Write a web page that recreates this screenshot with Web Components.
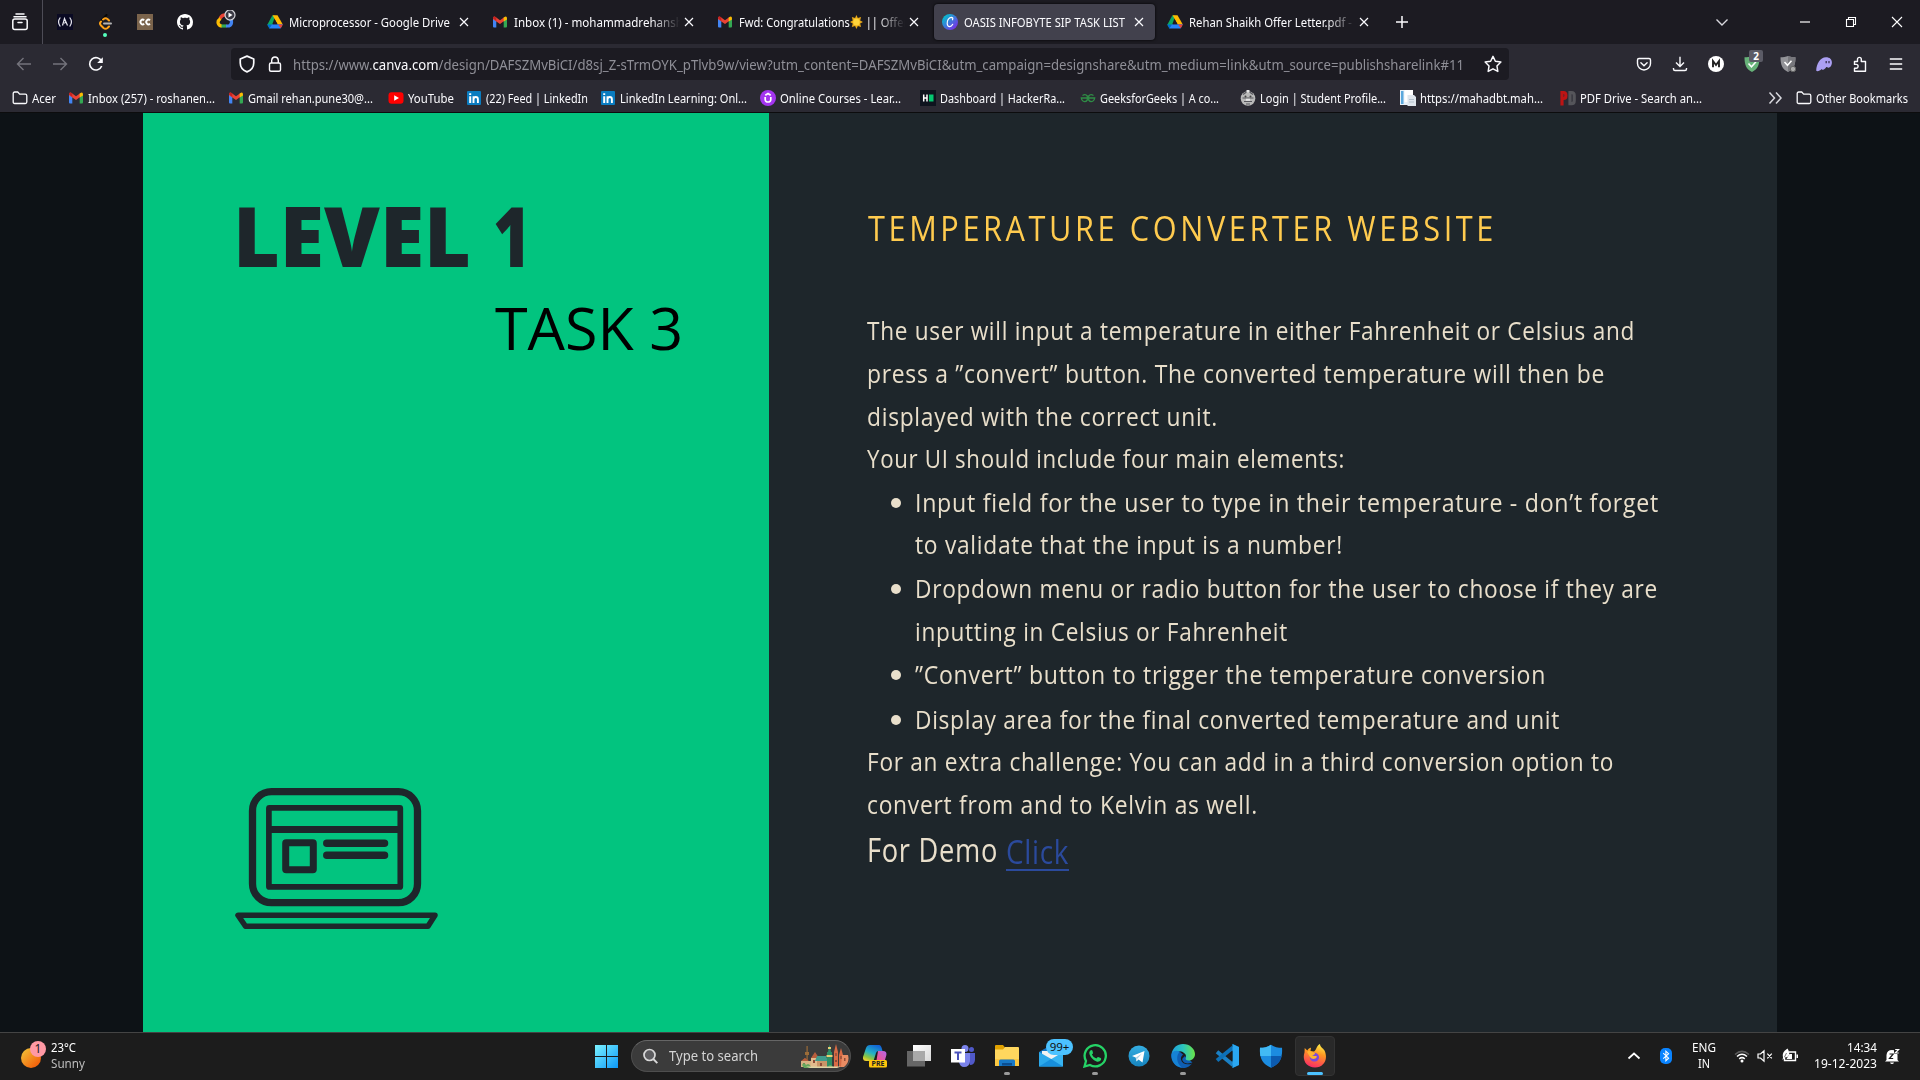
<!DOCTYPE html>
<html lang="en">
<head>
<meta charset="utf-8">
<title>OASIS INFOBYTE SIP TASK LIST</title>
<style>
html,body{margin:0;padding:0;background:#0d1216;overflow:hidden}
body{font-family:"Noto Sans","Open Sans",sans-serif;color:#fbfbfe}
</style>
</head>
<body>
<browser-desktop></browser-desktop>
<script>
const ICONS = {
view:['0 0 18 18','<g fill="none" stroke="#fbfbfe" stroke-width="1.5" stroke-linecap="round"><rect x="1.8" y="6" width="14.4" height="10.5" rx="2"/><path d="M3 3.7h12M5 1h8M7 9.5h4"/></g>'],
fcc:['0 0 16 16','<path fill="#0a0a23" d="M0 0h16v16H0z"/><g fill="none" stroke="#e8e8f0" stroke-width="1.2"><path d="M3.3 3.5Q-.2 8 3.3 12.5M12.7 3.5Q16.200 8 12.700 12.500M5.500 11.500 7.500 4.500 10.500 11.500M7.500 9.500 8.800 7.500"/></g>'],
leet:['0 0 16 16','<g fill="none" stroke-width="2" stroke-linecap="round"><path stroke="#070707" d="M9.500 1 3.500 7.500"/><path stroke="#ffa116" d="M4 7.500Q2 9.500 4 11.500L6.500 14Q8.500 15.500 10.500 14L12 12.500M6 5.500 7.500 4.500Q9 4 10.500 5L12 6.500"/><path stroke="#b3b3b3" d="M7 9.500h7"/></g>'],
cc:['0 0 16 16','<path fill="#7b644c" d="M0 0h16v16H0z"/><path d="M7.200 6.200A2.300 2.300 0 1 0 7.200 9.800M13 6.200A2.300 2.300 0 1 0 13 9.800" fill="none" stroke="#fff" stroke-width="1.900"/>'],
github:['0 0 16 16','<path fill="#fff" d="M8 0C3.58 0 0 3.58 0 8c0 3.540 2.290 6.530 5.470 7.590.4.070.550-.170.550-.380 0-.190-.010-.820-.010-1.490-2.010.370-2.530-.490-2.690-.940-.090-.230-.480-.940-.820-1.130-.280-.150-.680-.520-.010-.530.630-.010 1.080.580 1.230.820.720 1.210 1.870.870 2.330.660.070-.520.280-.870.510-1.070-1.780-.2-3.640-.890-3.640-3.950 0-.870.310-1.590.820-2.150-.080-.2-.360-1.020.080-2.120 0 0 .670-.210 2.200.820.640-.180 1.320-.270 2-.270s1.360.090 2 .270c1.530-1.040 2.200-.820 2.200-.820.440 1.100.160 1.920.080 2.120.510.560.820 1.270.820 2.150 0 3.070-1.870 3.750-3.650 3.950.290.250.540.730.540 1.480 0 1.070-.010 1.930-.010 2.200 0 .210.150.460.550.380A8 8 0 0 0 16 8c0-4.420-3.580-8-8-8z"/>'],
gcloud:['0 0 20 20','<g fill="none" stroke-width="3.200"><path stroke="#ea4335" d="M4 8.500Q6 4.500 10 5"/><path stroke="#fbbc04" d="M4.500 8.500Q1 11 2.500 14Q3.500 16 6 16"/><path stroke="#34a853" d="M5.500 16h5"/><path stroke="#4285f4" d="M10 16h3Q16 15 15.500 11L13 8"/></g><circle cx="14" cy="5" r="5" fill="#3a3944" stroke="#d5d5da" stroke-width="1.200"/><path fill="#fff" d="m12.500 2.500 4 2.500-4 2.500z"/>'],
drive:['0 0 16 16','<path fill="#0da960" d="M5.300 1.500h3L4.200 13.700 2.400 14.500.3 10.700z"/><path fill="#ffba00" d="M5.500 1.300h5l5.300 9.200h-5z"/><path fill="#2684fc" d="M4.900 10.300h10.900L13.600 14.500H2.300z"/><path fill="#0066da" d="M.3 10.500h4.600l-2.500 4z"/><path fill="#ea4335" d="M11 10.500h4.800l-2 3.800z"/><path fill="#1c1b22" d="M8 6.100 10.300 10.300H5.700z"/>'],
gmail:['0 0 16 16','<path fill="#4285f4" d="M1 4v8.500Q1 13.500 2 13.500h2.300V6z"/><path fill="#34a853" d="M15 4v8.500Q15 13.500 14 13.500h-2.300V6z"/><path fill="#ea4335" d="M1 4.500Q1 2 3.200 2.700L8 6.300 12.500 3v3.700L8 10 1 5.200z"/><path fill="#fbbc04" d="M11.700 3.500 13 2.700Q15 2 15 4.500v1L11.700 7.600z"/><path fill="#c5221f" d="M1 4.500 4.300 7V3.600L3 2.700Q1 2 1 4.500z"/>'],
canva:['0 0 16 16','<defs><linearGradient id="g" x1="0" y1="0" x2="1" y2="1"><stop offset=".1" stop-color="#00c4cc"/><stop offset=".9" stop-color="#7d2ae8"/></linearGradient></defs><circle cx="8" cy="8" r="8" fill="url(#g)"/><path d="M10.500 5.800Q11.500 3.300 9.300 3.300C6.500 3.400 5 7 5.200 9.700Q5.500 12.700 7.700 12.600 9.500 12.500 10.700 10.300" fill="none" stroke="#fff" stroke-width="1.200" stroke-linecap="round"/>'],
close:['0 0 16 16','<path d="m4 4 8 8M12 4 4 12" stroke="#fbfbfe" stroke-width="1.200"/>'],
plus:['0 0 16 16','<path d="M8 2v12M2 8h12" stroke="#fbfbfe" stroke-width="1.500"/>'],
down:['0 0 16 16','<path d="m2.500 5.500 5.500 5.500 5.500-5.500" fill="none" stroke="#d8d8de" stroke-width="1.400"/>'],
min:['0 0 16 16','<path d="M3 8h10" stroke="#fff" stroke-width="1.200"/>'],
restore:['0 0 16 16','<g fill="none" stroke="#fff" stroke-width="1.100"><path d="M3.500 5.500h7v7h-7zM5.500 5.500V3.500h7v7h-2"/></g>'],
wclose:['0 0 16 16','<path d="m3 3 10 10M13 3 3 13" stroke="#fff" stroke-width="1.100"/>'],
back:['0 0 16 16','<path d="M15 8H1.500M7.500 2 1.500 8l6 6" fill="none" stroke="#74737c" stroke-width="1.400"/>'],
fwd:['0 0 16 16','<path d="M1 8h13.500M8.500 2l6 6-6 6" fill="none" stroke="#74737c" stroke-width="1.400"/>'],
reload:['0 0 16 16','<path d="M13.700 10A6.200 6.200 0 1 1 13.500 5.200" fill="none" stroke="#fbfbfe" stroke-width="1.600"/><path fill="#fbfbfe" d="M14.800 1.200v5.700H9.200z"/>'],
shield:['0 0 16 16','<path d="M8 1 14 3.600V7c0 3.500-2.500 6.500-6 8-3.500-1.500-6-4.500-6-8V3.600z" fill="none" stroke="#fbfbfe" stroke-width="1.500" stroke-linejoin="round"/>'],
lock:['0 0 16 16','<g fill="none" stroke="#fbfbfe" stroke-width="1.400"><rect x="2.500" y="7" width="11" height="8.200" rx="1.500"/><path d="M4.700 7V4.200Q4.900 1 8 1t3.300 3.200V7"/></g>'],
star:['0 0 16 16','<path d="m8 1.200 2.100 4.400 4.900.7-3.500 3.400.8 4.900L8 12.300l-4.300 2.300.8-4.900L1 6.300l4.900-.7z" fill="none" stroke="#fbfbfe" stroke-width="1.300" stroke-linejoin="round"/>'],
pocket:['0 0 16 16','<g fill="none" stroke="#fbfbfe" stroke-width="1.400" stroke-linecap="round"><path d="M3 2.500h10q1.500 0 1.500 1.500v3.500a6.500 6.500 0 0 1-13 0V4q0-1.500 1.500-1.500z"/><path d="M4.900 6.700 8 9.700l3.100-3"/></g>'],
download:['0 0 16 16','<path d="M8 .8v9.500M4 6.500l4 4 4-4M1.500 12v1q0 1.500 1.500 1.500h10q1.500 0 1.500-1.500v-1" fill="none" stroke="#fbfbfe" stroke-width="1.400"/>'],
m:['0 0 16 16','<circle cx="8" cy="8" r="8" fill="#fff"/><path d="M5 11.300V5l3 4 3-4v6.300" fill="none" stroke="#222" stroke-width="1.900"/>'],
gshield:['0 0 16 16','<path fill="#67b279" d="M8 0c2 1 5 1.300 7.500 1.300 0 7-1.500 12-7.500 14.700C2 13.300.5 8.300.5 1.300 3 1.300 6 1 8 0z"/><path d="m4.500 7.500 3 3.300 4.500-5" fill="none" stroke="#fff" stroke-width="1.500"/>'],
grshield:['0 0 16 16','<path fill="#939398" d="M8 0c2 1 5 1.300 7.500 1.300 0 7-1.500 12-7.500 14.700C2 13.300.5 8.300.5 1.300 3 1.300 6 1 8 0z"/><path fill="#77777c" d="M8 0v16c6-2.700 7.500-7.700 7.500-14.700C13 1.300 10 1 8 0z"/><path d="m4.500 6 3 3.300 4-4.500" fill="none" stroke="#fff" stroke-width="1.500"/><circle cx="13" cy="13" r="2.700" fill="#aaa" stroke="#666"/>'],
ghost:['0 0 16 16','<path fill="#ab9ff2" d="M.2 14.500C.5 8 4 1.300 10 1.300c4 0 6.200 2.500 5.900 6-.3 2.700-1.900 4.500-3.500 4.400-1.300 0-1.500-1-2.200-.4C8 14 6 14.500 5.500 13.100c-1.500 2-4.800 3-5.300 1.400z"/><path stroke="#37304f" stroke-width="1.300" d="M10.200 5v2.200M13 5v2.200"/>'],
puzzle:['0 0 16 16','<path d="M2.500 5.500h3V3.300a1.900 1.900 0 0 1 3.800 0v2.200h4.200v9.700H2.500v-3h1.700a1.900 1.900 0 0 0 0-3.800H2.500z" fill="none" stroke="#fbfbfe" stroke-width="1.400" stroke-linejoin="round"/>'],
menu:['0 0 16 16','<path d="M1.800 3h12.400M1.800 8h12.400M1.800 13h12.400" stroke="#fbfbfe" stroke-width="1.400"/>'],
folder:['0 0 16 16','<path d="M1.200 12V3.500q0-1.500 1.500-1.500h3l2 2.200h5.600q1.500 0 1.500 1.500V12q0 1.500-1.500 1.500H2.700q-1.500 0-1.500-1.500z" fill="none" stroke="#fbfbfe" stroke-width="1.300"/>'],
youtube:['0 0 16 16','<rect x=".5" y="2.200" width="15" height="11.600" rx="3" fill="#f00"/><path fill="#fff" d="m6.200 5.300 4.800 2.700-4.800 2.700z"/>'],
linkedin:['0 0 16 16','<rect x="1" y="1" width="14" height="14" rx="1" fill="#0a7cc0"/><path stroke="#fff" stroke-width="2" d="M4.200 6.200V13M4.200 3.300v1.700"/><path d="M7.500 13V6.200M7.500 9.500q0-2.500 2.200-2.500t2.200 2.300V13" fill="none" stroke="#fff" stroke-width="1.900"/>'],
udemy:['0 0 16 16','<circle cx="8" cy="8" r="8" fill="#a435f0"/><path d="M5.200 7v2.700Q5.400 12 8 12t2.800-2.300V7M5.300 5.200 8 3.500l2.700 1.700" fill="none" stroke="#fff" stroke-width="1.700"/>'],
hr:['0 0 16 16','<path fill="#0e141e" d="M0 0h16v16H0z"/><path d="M3.700 4.500v7M7 4.500v7M4 8h3" stroke="#fff" stroke-width="1.500"/><path fill="#05c770" d="M9 4.500h4.500v7H9z"/>'],
gfg:['0 0 16 16','<path d="M2.500 5.500Q5.500 3.500 7.300 6v4Q5.500 12.500 3 11 1.500 10 1.300 8h13.400Q14.500 10 13 11 10.500 12.500 8.700 10V6Q10.500 3.500 13.500 5.500" fill="none" stroke="#2f8d46" stroke-width="1.300"/>'],
student:['0 0 16 16','<circle cx="8" cy="8.500" r="7.300" fill="#b9b9b9"/><path d="M3 4.500 8 1l5 3.500M2.500 8h11M4 11.500h8M6 14h4" fill="none" stroke="#56565c" stroke-width="1.100"/><circle cx="5.500" cy="6.500" r="1" fill="#444"/><circle cx="10.500" cy="6.500" r="1" fill="#444"/><path fill="#e5e5e5" d="M6.500 0h3v2.500h-3zM6 8.700h4v2H6z"/>'],
page:['0 0 16 16','<path fill="#e8f0f8" d="M0 0h11v15H0z"/><path fill="#5ba8dc" d="M1 1h2.500v13H1z"/><path fill="#fff" d="M4.500 0h8.500v12H4.500z"/><path fill="#dfe6ed" d="M7.500 5H14l2 2v9H7.500z"/><path stroke="#b3c0cc" d="M9 9.500h5M9 12h5"/>'],
pd:['0 0 16 16','<path fill="none" stroke="#bd1414" stroke-width="3.200" d="M2 15.500V2.500H3.700q2.200 0 2.200 3t-2.200 3H2"/><path fill="none" stroke="#55555a" stroke-width="3.200" d="M10 2.500V13.700H11.500q2.700 0 2.700-3V5.500q0-3-2.700-3z"/>'],
more:['0 0 16 16','<path d="m2.500 2.500 5 5.500-5 5.500M9 2.500l5 5.500-5 5.500" fill="none" stroke="#d8d8de" stroke-width="1.500"/>'],
sun:['0 0 26 30','<defs><linearGradient id="g" x1="0" y1="0" x2="1" y2="1"><stop stop-color="#f0c93c"/><stop offset=".8" stop-color="#f3660d"/></linearGradient></defs><circle cx="10" cy="18" r="10" fill="url(#g)"/>'],
win:['0 0 24 24','<defs><linearGradient id="g" x1="0" y1="0" x2="1" y2="1" ><stop stop-color="#7df4ff"/><stop offset="1" stop-color="#0a96f8"/></linearGradient></defs><mask id="m"><path fill="#fff" d="M0 1h11v11H0zM12 1h11v11H12zM0 13h11v11H0zM12 13h11v11H12z"/></mask><rect width="24" height="24" fill="url(#g)" mask="url(#m)"/>'],
search:['0 0 16 16','<circle cx="7.500" cy="7" r="5.500" fill="#5d5d60" stroke="#d8d8d8" stroke-width="1.700"/><path d="m11.300 11 4 4.200" stroke="#d8d8d8" stroke-width="1.900"/>'],
city:['0 0 50 24','<path fill="#9c6c38" d="M3 23V17l3-3 2 3V23zM7.500 2h1.200v15H7.500zM6 8h4v3H6z"/><path fill="#d9b384" d="M2 17h12v6H2z"/><path fill="#b85d3c" d="M2 17l4-3 4 3zM12 14l4-6 4 6z"/><path fill="#e2bb8d" d="M12 14h8v9h-8z"/><path fill="#3f9b8c" d="M18 12h9l2 5H16z"/><path fill="#c99568" d="M18 17h10v6H18z"/><path fill="#2c8f65" d="M28 23V8h5v15zM29 8l1.500-8L32 8z"/><path fill="#e7cf74" d="M29 3h3v2h-3zM27.500 11h6v2h-6z"/><path fill="#d96b45" d="M35 8 37 0l2 8v15h-4zM40 11l2-7 2 7v12h-4z"/><path fill="#e98c63" d="M43 11h6q2 7-4 12h-3z"/><path fill="#8e4c38" d="M36.300 9h1.400v3h-1.400zM41.300 12h1.400v3h-1.400zM36 16h2v2h-2zM4 19h2v3H4zM14 16h2v3h-2zM45 14h1.500v3H45zM21 19h2v3h-2z"/><path fill="#67a85e" d="M3 21q2-4 4 0 3-3 5 2h17q2-4 5 0l-1 1H5z"/><path fill="#ddd4a6" d="M7 22.500h35l-4 1.500H11z"/>'],
copilot:['0 0 24 24','<defs><linearGradient id="a" x1=".7" y1="0" x2=".2" y2="1"><stop stop-color="#1262d6"/><stop offset=".5" stop-color="#23b1c6"/><stop offset=".8" stop-color="#8dc63f"/><stop offset="1" stop-color="#f3d02f"/></linearGradient><linearGradient id="b" x1="1" y1="0" x2="0" y2="1"><stop stop-color="#b267ea"/><stop offset=".6" stop-color="#ee5594"/><stop offset="1" stop-color="#ff9347"/></linearGradient></defs><path fill="url(#b)" d="M15 7h5q4 0 3.400 4l-2 7q-1 3-4 3h-7q2-.500 3-4z"/><path fill="url(#a)" d="M7 1h9q2 0 3 4l.5 2h-4q-2 0-2.500 2l-2.500 8H3q-3.500 0-3-4L3 4q1-3 4-3z"/><rect x="6" y="16" width="18" height="7.500" rx="1.500" fill="#ffc60b"/>'],
taskview:['0 0 24 24','<defs><linearGradient id="g" x1="0" y1="0" x2="1" y2="1"><stop stop-color="#fff"/><stop offset="1" stop-color="#d8d8d8"/></linearGradient></defs><path fill="#666" d="M0 7h18v15.500H0z"/><path fill="url(#g)" d="M6 1h18v16H6z"/><path fill="#a9a9a9" d="M6 7h12v10H6z"/>'],
teams:['0 0 24 24','<circle cx="14" cy="4.500" r="3.500" fill="#7b83eb"/><circle cx="20.500" cy="5.500" r="2.500" fill="#5059c9"/><path fill="#5059c9" d="M16 9h8v7q-.500 5-5 5z"/><path fill="#7b83eb" d="M9 9h10v8q-.500 6-6 6-4 0-5-5z"/><path fill="#fff" d="M0 5h14v13.500H0z"/><path stroke="#4b53bc" stroke-width="2" d="M3.500 8.500h7M7 8.500V16"/>'],
explorer:['0 0 24 24','<path fill="#e0a100" d="M0 2q0-1 1-1h7l2 2.500V7H0z"/><path fill="#ffd75e" d="M0 5.500h8L10 3h13q1 0 1 1v18H0z"/><path fill="#f7bd2e" d="M0 15h24v7H0z" opacity=".6"/><path fill="#1779c8" d="M4 22v-5q0-1.500 1.500-1.500h13Q20 15.500 20 17v5z"/><path fill="#0b4e91" d="M7 19h10v2.500H7z"/>'],
mail:['0 0 24 24','<path fill="#1475c4" d="M0 8 12 1l12 7v14H0z"/><path fill="#f2f2f2" d="M3 7h18v8H3z"/><path fill="#2ca9eb" d="m0 8 14 8L0 22.500z"/><path fill="#38b4f2" d="m24 8-24 14.500h24z"/><path fill="#178fdc" d="M12 15 24 22.500H0z"/>'],
whatsapp:['0 0 24 24','<path d="M1.500 22.500 3 17A10.600 10.600 0 1 1 7 21z" fill="#1c1c1c" stroke="#25d366" stroke-width="2.300"/><path fill="#25d366" d="M8.200 6q-2.700 1.500-1.600 4.500 1.700 4.500 6.900 7 2.700 1 4.500-1.500.500-1.500-.3-1.900l-2.600-1.200q-1.100.1-1.600 1.700Q10 13.500 8.900 10.600q1.600-1.100 1-2L9.400 6.500z"/>'],
telegram:['0 0 24 24','<defs><linearGradient id="g" x1="0" y1="0" x2="0" y2="1"><stop stop-color="#35aee2"/><stop offset="1" stop-color="#1683bd"/></linearGradient></defs><circle cx="12" cy="12" r="10.500" fill="url(#g)"/><path fill="#fff" d="M5 12 17.500 7l-2 11.500-4-3-2 2-.800-4z"/><path d="m9 13.500 6-4-4.500 5-.8 2.500z" fill="#a7cfe5"/>'],
edge:['0 0 24 24','<defs><linearGradient id="a"><stop stop-color="#1e9ede"/><stop offset=".5" stop-color="#2bc5bd"/><stop offset="1" stop-color="#6ae547"/></linearGradient></defs><path fill="#0f5eb3" d="M.2 10C0 17 5 24 12 24c4 0 7-1.500 9.500-5.500L9 8z"/><path fill="url(#a)" d="M.4 10C2 3.500 6 0 12 0c7 0 12 5 12 10 0 4-3 6.500-6 6.500-3 0-4-1-3-3C16 8 6 4 .4 10z"/><path fill="#1682d4" d="M.4 11C1 7 5 6 9 7.500c-4 3-4 12 2 16C4 23 0 17 .4 11z"/><path fill="#1c1c1c" d="M14.500 11.300c-1 2-4 2.700-3 5.200 1.500 3.700 7 3.500 11 1.500l-.800 1.200c-5 2.500-10.500.8-11.700-3.500C9.300 12.700 12 10 14 10z"/>'],
vscode:['0 0 24 24','<path fill="#0065a9" d="M17.500 0 24 3v18l-6.500 3z"/><path d="m2 7.800 16 13.200" stroke="#1b80c4" stroke-width="4"/><path d="M2 16.500 18 3.500" stroke="#0d70b6" stroke-width="4"/><path fill="#2aa7f1" d="M17.500 0 24 3v18l-6.500 3z"/><path fill="#1c1c1c" d="M17.500 7v10l-6-5z"/>'],
defender:['0 0 24 24','<path fill="#1c8ce0" d="M12 .800c3.500 2.500 7 3 11 3 .800 9.500-2 16-11 20C3 19.800.200 13.300 1 3.800c4 0 7.500-.500 11-3z"/><path fill="#42baf4" d="M12 .800V12H1.300Q.800 9 1 3.800c4 0 7.500-.500 11-3z"/><path fill="#0c5bb0" d="M12 12h10.700C21.500 17.500 18.500 21 12 23.800z"/>'],
firefox:['0 0 24 24','<defs><linearGradient id="a" x1=".7" y1="0" x2=".4" y2="1"><stop stop-color="#fff04a"/><stop offset=".4" stop-color="#ff9722"/><stop offset="1" stop-color="#fa2c65"/></linearGradient></defs><path fill="url(#a)" d="M17 0c0 3 3 4 4.500 6.500C25.500 15 21 23.500 12 23.500S-1 16 1.500 8.500L1.700 4 4.300 6.600C5.800 3.600 8 3.700 8 3.700L7.500 7 11 7.500C14 5.500 13 2 17 0z"/><path fill="#7b48dc" d="M6.800 12.500C7.500 9 11 8.500 12.500 9 17 9.700 17.500 16.500 12.500 17.500c-3.500.600-6-2-5.700-5z"/><path fill="#ffb330" d="M4 8q2-2 4-.5l4 1.500q0 2-3 2.200c1.500 1.300 4 .300 5 1.300-1.500 3.500-5.500 3-7 .500z"/>'],
up:['0 0 16 16','<path d="m2.500 10.500 5.500-5 5.500 5" fill="none" stroke="#fff" stroke-width="1.700"/>'],
bt:['0 0 12 16','<rect width="12" height="16" rx="5" fill="#0a84ff"/><path d="m3.200 5.200 5.400 5-2.700 2.500V3.200l2.700 2.500-5.400 5" fill="none" stroke="#fff" stroke-width="1.100"/>'],
wifi:['0 0 16 16','<g fill="none" stroke-width="1.500"><path stroke="#5b5b5b" d="M1 6.500Q8 .2 15 6.500"/><path stroke="#fff" d="M3 8.500Q8 4 13 8.500M5.200 10.800Q8 8.500 10.800 10.800"/></g><circle cx="8" cy="13" r="1.500" fill="#fff"/>'],
mute:['0 0 16 16','<path d="M1 6h2.500L7 2.800v10.400L3.500 10H1zM10.300 5.700l4.500 4.600M14.800 5.700l-4.500 4.600" fill="none" stroke="#fff" stroke-width="1.200"/>'],
battery:['0 0 16 16','<path d="M7 4h6.500v8.500H2.500V10" fill="none" stroke="#fff" stroke-width="1.400"/><path fill="#fff" d="M14.500 6.500H16V10h-1.500zM7.500 6H10v5H4.500z"/><path fill="#fff" d="M1 9.500C0 4 3 2.500 5.500.5 8.500 5 7.500 9.500 3 9.500L.5 12z"/><path d="m2.500 9 2-4" stroke="#333" stroke-width=".7"/>'],
bell:['0 0 16 16','<path fill="#fff" d="M2.500 12V7Q3 2 8 2t5.500 5v5l1.500 1.500H1zM6 14.500h4Q9.500 16 8 16t-2-1.500z"/><path d="M5.500 6h3.700l-3.700 4.500h3.700" fill="none" stroke="#1c1c1c" stroke-width="1.200"/><path fill="#1c1c1c" d="M10 0h6v6h-6z"/><path d="M11.200 1.500h3.500l-3.500 3.500h3.500" fill="none" stroke="#fff" stroke-width="1.200"/>'],
laptop:['0 0 204 144','<g fill="none" stroke="#1e262b"><rect x="17.500" y="3.700" width="165" height="111" rx="19" stroke-width="7.300"/><rect x="33.900" y="19.900" width="131.400" height="79" rx=".5" stroke-width="5.700"/><path stroke-width="7" d="M34 41.500h131"/><rect x="50.700" y="54.700" width="27.600" height="27" rx=".5" stroke-width="7" stroke-linejoin="round"/><path stroke-width="7.500" stroke-linecap="round" d="M91.800 55.300h57.700M91.800 67.200h57.700"/><path stroke-width="5.500" stroke-linejoin="round" d="M3 127.300h197l-7 11H10.500z"/></g>']
};

class UiIcon extends HTMLElement{
  connectedCallback(){
    if(this.shadowRoot)return;
    const r=this.attachShadow({mode:'open'});
    const [vb,body]=ICONS[this.getAttribute('name')];
    const w=this.getAttribute('w')||16,h=this.getAttribute('h')||w;
    r.innerHTML=`<style>:host{display:block;flex:none;width:${w}px;height:${h}px}svg{display:block;width:100%;height:100%}</style><svg viewBox="${vb}" preserveAspectRatio="none">${body}</svg>`;
  }
}
customElements.define('ui-icon',UiIcon);

/* One line of text, condensed or expanded to the width given in "w". */
class FitText extends HTMLElement{
  connectedCallback(){
    if(this.shadowRoot)return;
    const r=this.attachShadow({mode:'open'});
    const w=+this.getAttribute('w');
    r.innerHTML=`<style>:host{display:block;flex:none;width:${w}px;white-space:nowrap}span{display:inline-block;transform-origin:0 50%;white-space:pre}</style><span><slot></slot></span>`;
    const s=r.querySelector('span');
    const n=s.getBoundingClientRect().width;
    if(n)s.style.transform=`scaleX(${w/n})`;
  }
}
customElements.define('fit-text',FitText);

class BrowserTab extends HTMLElement{
  connectedCallback(){
    const r=this.attachShadow({mode:'open'});
    r.innerHTML=`<style>
    :host{display:flex;align-items:center;box-sizing:border-box;flex:none;width:221px;height:36px;padding:0 7px 0 8px;margin-right:4px;border-radius:4px;font-size:12px;line-height:18px}
    :host([active]){background:#42414d;box-shadow:0 0 3px #000}
    .t{width:166px;margin:1px 1px 0 6px;overflow:hidden;flex:none}
    :host([fade]) .t{-webkit-mask-image:linear-gradient(90deg,#000 138px,transparent 166px);mask-image:linear-gradient(90deg,#000 138px,transparent 166px)}
    </style><ui-icon name="${this.getAttribute('icon')}"></ui-icon><div class="t"><slot></slot></div><ui-icon name="close" w="16"></ui-icon>`;
  }
}
customElements.define('browser-tab',BrowserTab);

class TabStrip extends HTMLElement{
  connectedCallback(){
    this.attachShadow({mode:'open'}).innerHTML=`<style>
    :host{display:flex;align-items:center;height:44px;background:#1c1b22}
    .view{width:43px;height:44px;display:flex;align-items:center;padding-left:11px;box-sizing:border-box;border-right:1px solid #4d4c56}
    .pins{display:flex;gap:24px;padding-left:14px;width:201px;box-sizing:border-box;align-items:center}
    .leet{position:relative}.leet i{position:absolute;left:6px;top:19px;width:4px;height:4px;border-radius:50%;background:#54ffbd}
    .g{margin:-5px 0 0 -1px}
    .ctl{display:flex;align-items:center}
    </style>
    <div class="view"><ui-icon name="view" w="18"></ui-icon></div>
    <div class="pins"><ui-icon name="fcc"></ui-icon><div class="leet"><ui-icon name="leet"></ui-icon><i></i></div><ui-icon name="cc"></ui-icon><ui-icon name="github"></ui-icon><ui-icon class="g" name="gcloud" w="20"></ui-icon></div>
    <div class="ctl" style="margin-left:15px">
    <browser-tab icon="drive"><fit-text w="161">Microprocessor - Google Drive</fit-text></browser-tab>
    <browser-tab icon="gmail" fade><fit-text w="169">Inbox (1) - mohammadrehansh</fit-text></browser-tab>
    <browser-tab icon="gmail" fade><fit-text w="169">Fwd: Congratulations<svg width="14" height="14" viewBox="0 0 14 14" style="vertical-align:-2px"><path d="M7 0 8.500 3 12 2 11 5.500 14 7 11 8.500 12 12 8.500 11 7 14 5.500 11 2 12 3 8.500 0 7 3 5.500 2 2 5.500 3z" fill="#e8a917"/><circle cx="7" cy="7" r="3.500" fill="#ffd43b"/></svg> || Offer</fit-text></browser-tab>
    <browser-tab icon="canva" active><fit-text w="161">OASIS INFOBYTE SIP TASK LIST</fit-text></browser-tab>
    <browser-tab icon="drive" fade><fit-text w="163">Rehan Shaikh Offer Letter.pdf -</fit-text></browser-tab>
    </div>
    <ui-icon name="plus" w="16" style="margin-left:10px"></ui-icon>
    <ui-icon name="down" w="16" style="margin-left:304px"></ui-icon>
    <ui-icon name="min" w="16" style="margin-left:67px"></ui-icon>
    <ui-icon name="restore" w="16" style="margin-left:30px"></ui-icon>
    <ui-icon name="wclose" w="16" style="margin-left:30px"></ui-icon>`;
  }
}
customElements.define('tab-strip',TabStrip);

class NavBar extends HTMLElement{
  connectedCallback(){
    this.attachShadow({mode:'open'}).innerHTML=`<style>
    :host{display:flex;align-items:center;height:40px;background:#2b2a33;box-sizing:border-box;padding-left:16px}
    .nav{display:flex;gap:20px;width:215px}
    .url{display:flex;align-items:center;width:1278px;height:32px;background:#1c1b22;border-radius:4px;box-sizing:border-box;padding-left:7px;font-size:14px;color:#8f8f97}
    .url b{font-weight:400;color:#fbfbfe}
    .url fit-text{margin-top:1px}
    .ext{display:flex;gap:20px;margin-left:127px}
    .s{position:relative}.s span{position:absolute;left:5px;top:-6px;width:14px;height:12px;background:#5b5b66;border-radius:2px;font:bold 10px/12px "Noto Sans";text-align:center;color:#fff}
    </style>
    <div class="nav"><ui-icon name="back"></ui-icon><ui-icon name="fwd"></ui-icon><ui-icon name="reload"></ui-icon></div>
    <div class="url"><ui-icon name="shield" w="18"></ui-icon><ui-icon name="lock" w="16" style="margin:0 10px 0 11px"></ui-icon>
    <fit-text w="1171">https://www.<b>canva.com</b>/design/DAFSZMvBiCI/d8sj_Z-sTrmOYK_pTlvb9w/view?utm_content=DAFSZMvBiCI&amp;utm_campaign=designshare&amp;utm_medium=link&amp;utm_source=publishsharelink#11</fit-text>
    <ui-icon name="star" w="18" style="margin-left:20px"></ui-icon></div>
    <div class="ext"><ui-icon name="pocket"></ui-icon><ui-icon name="download"></ui-icon><ui-icon name="m"></ui-icon><div class="s"><ui-icon name="gshield"></ui-icon><span>2</span></div><ui-icon name="grshield"></ui-icon><ui-icon name="ghost"></ui-icon><ui-icon name="puzzle"></ui-icon><ui-icon name="menu"></ui-icon></div>`;
  }
}
customElements.define('nav-bar',NavBar);

class BookmarkBar extends HTMLElement{
  connectedCallback(){
    const L=[['folder','Acer',56,24],['gmail','Inbox (257) - roshanen...',160,127],['gmail','Gmail rehan.pune30@...',160,125],['youtube','YouTube',78,46],['linkedin','(22) Feed | LinkedIn',134,102],['linkedin','LinkedIn Learning: Onl...',160,127],['udemy','Online Courses - Lear...',160,121],['hr','Dashboard | HackerRa...',160,125],['gfg','GeeksforGeeks | A co...',160,119],['student','Login | Student Profile...',160,126],['page','https://mahadbt.mah...',160,123],['pd','PDF Drive - Search an...',207,122],['more','',29,0],['folder','Other Bookmarks',120,92]];
    this.attachShadow({mode:'open'}).innerHTML=`<style>
    :host{display:flex;align-items:flex-start;height:29px;background:#2b2a33;box-sizing:border-box;padding:4px 0 0 12px;font-size:12px;line-height:20px;border-bottom:1px solid #0c0c0d}
    div{display:flex;gap:4px;align-items:center;flex:none;height:20px}
    fit-text{margin-top:2px}
    </style>`+L.map(([i,t,w,tw])=>`<div style="width:${w}px"><ui-icon name="${i}"></ui-icon>${t?`<fit-text w="${tw}">${t}</fit-text>`:''}</div>`).join('');
  }
}
customElements.define('bookmark-bar',BookmarkBar);

class SlideCover extends HTMLElement{
  connectedCallback(){
    this.attachShadow({mode:'open'}).innerHTML=`<style>
    :host{display:flex;flex-direction:column;width:626px;height:919px;background:#02c47f;color:#1e262b;font-family:"Open Sans","Noto Sans",sans-serif}
    .lv{display:flex;gap:22px;font-weight:800;font-size:82.500px;line-height:100px;margin:72px 0 0 90px}
    .tk{font-size:58.500px;line-height:80px;margin:2px 0 0 352px;color:#000}
    ui-icon{margin:421px 0 0 92px}
    </style><div class="lv"><fit-text w="238">LEVEL</fit-text><fit-text w="38">1</fit-text></div><fit-text class="tk" w="188">TASK 3</fit-text><ui-icon name="laptop" w="204" h="144"></ui-icon>`;
  }
}
customElements.define('slide-cover',SlideCover);

/* A paragraph line; "gap" is the space above, "bullet" draws a list dot. */
class BriefLine extends HTMLElement{
  connectedCallback(){
    const g=this.getAttribute('gap');
    this.attachShadow({mode:'open'}).innerHTML=`<style>
    :host{display:flex;align-items:center;height:30px;line-height:30px;margin-top:${g}px}
    :host([indent]){padding-left:48px}
    :host([bullet]){padding-left:24px}
    i{display:none;width:10px;height:10px;border-radius:50%;background:#e9dfcb;margin:2px 14px 0 0}
    :host([bullet]) i{display:block}
    </style><i></i><slot></slot>`;
  }
}
customElements.define('brief-line',BriefLine);

class SlideBrief extends HTMLElement{
  connectedCallback(){
    this.attachShadow({mode:'open'}).innerHTML=`<style>
    :host{display:block;box-sizing:border-box;width:1008px;height:919px;background:#1e262b;padding:90px 0 0 98px;color:#e9dfcb;font-family:"Open Sans","Noto Sans",sans-serif;font-size:25.500px;letter-spacing:.800px}
    .h{font-size:34px;line-height:50px;letter-spacing:4px;color:#ffcb4f;margin-left:1px}
    .demo{font-size:32px}
    .link{border-bottom:2px solid #2b4a9c;height:34px;line-height:34px;color:#2b4a9c;margin:5px 0 0 8px}
    </style>
    <fit-text class="h" w="629">TEMPERATURE CONVERTER WEBSITE</fit-text>
    <brief-line gap="62"><fit-text w="768">The user will input a temperature in either Fahrenheit or Celsius and</fit-text></brief-line>
    <brief-line gap="13"><fit-text w="738">press a ”convert” button. The converted temperature will then be</fit-text></brief-line>
    <brief-line gap="13"><fit-text w="351">displayed with the correct unit.</fit-text></brief-line>
    <brief-line gap="12"><fit-text w="478">Your UI should include four main elements:</fit-text></brief-line>
    <brief-line gap="14" bullet><fit-text w="744">Input field for the user to type in their temperature - don’t forget</fit-text></brief-line>
    <brief-line gap="12" indent><fit-text w="428">to validate that the input is a number!</fit-text></brief-line>
    <brief-line gap="14" bullet><fit-text w="743">Dropdown menu or radio button for the user to choose if they are</fit-text></brief-line>
    <brief-line gap="13" indent><fit-text w="373">inputting in Celsius or Fahrenheit</fit-text></brief-line>
    <brief-line gap="13" bullet><fit-text w="631">”Convert” button to trigger the temperature conversion</fit-text></brief-line>
    <brief-line gap="15" bullet><fit-text w="645">Display area for the final converted temperature and unit</fit-text></brief-line>
    <brief-line gap="12"><fit-text w="747">For an extra challenge: You can add in a third conversion option to</fit-text></brief-line>
    <brief-line gap="13"><fit-text w="391">convert from and to Kelvin as well.</fit-text></brief-line>
    <brief-line gap="16" class="demo"><fit-text w="131">For Demo</fit-text><fit-text class="link" w="63">Click</fit-text></brief-line>`;
  }
}
customElements.define('slide-brief',SlideBrief);

class TaskBar extends HTMLElement{
  connectedCallback(){
    this.attachShadow({mode:'open'}).innerHTML=`<style>
    :host{display:flex;align-items:center;height:48px;box-sizing:border-box;background:#1c1c1c;border-top:1px solid #444;padding-bottom:1px;font-size:12px;line-height:16px;color:#fff}
    .w{display:flex;width:574px;padding-left:21px;gap:4px;align-items:center;flex:none}
    .w .sun{position:relative;width:26px;height:30px;margin-top:-3px}
    .w .sun b{position:absolute;left:9px;top:1px;width:16px;height:16px;border-radius:50%;background:#ff99a4;color:#222;font:12px/16px "Noto Sans";text-align:center}
    .lo{color:#bdbdbd}
    .search{display:flex;align-items:center;box-sizing:border-box;width:220px;height:32px;margin:0 12px;border:1px solid #4e4e4e;border-top-color:#666;border-radius:16px;background:#3b3b3b;font-size:14px;color:#d4d4d4;padding-left:10px}
    .apps{display:flex;gap:20px;flex:none}
    .a{position:relative;width:24px;height:24px}
    .a.on::after{content:"";position:absolute;left:9px;top:28px;width:6px;height:3px;border-radius:2px;background:#9a9a9a}
    .a.act::before{content:"";position:absolute;left:-8px;top:-8px;width:38px;height:38px;background:#292929;border:1px solid #333;border-radius:4px}
    .a.act::after{content:"";position:absolute;left:4px;top:28px;width:16px;height:3px;border-radius:2px;background:#4cc2ff}
    .a ui-icon{position:relative}
    .pre{position:absolute;left:6px;top:16px;width:18px;text-align:center;font:bold 7px/8px "Noto Sans";color:#222}
    .n{position:absolute;left:7px;top:-5px;width:27px;height:16px;border-radius:8px;background:#4cc2ff;color:#111;font:11.500px/16px "Noto Sans";text-align:center}
    .tray{display:flex;align-items:center;margin-left:299px}
    .c{display:flex;flex-direction:column;align-items:center}.e{display:flex;flex-direction:column;align-items:flex-end}
    </style>
    <div class="w"><div class="sun"><ui-icon name="sun" w="26" h="30"></ui-icon><b>1</b></div><div><fit-text w="25">23°C</fit-text><fit-text class="lo" w="34">Sunny</fit-text></div></div>
    <ui-icon name="win" w="24"></ui-icon>
    <div class="search"><ui-icon name="search" w="16"></ui-icon><fit-text w="89" style="margin:0 41px 0 11px">Type to search</fit-text><ui-icon name="city" w="50" h="24"></ui-icon></div>
    <div class="apps">
    <div class="a"><ui-icon name="copilot" w="24"></ui-icon><span class="pre">PRE</span></div>
    <div class="a"><ui-icon name="taskview" w="24"></ui-icon></div>
    <div class="a"><ui-icon name="teams" w="24"></ui-icon></div>
    <div class="a on"><ui-icon name="explorer" w="24"></ui-icon></div>
    <div class="a"><ui-icon name="mail" w="24"></ui-icon><span class="n">99+</span></div>
    <div class="a on"><ui-icon name="whatsapp" w="24"></ui-icon></div>
    <div class="a"><ui-icon name="telegram" w="24"></ui-icon></div>
    <div class="a on"><ui-icon name="edge" w="24"></ui-icon></div>
    <div class="a"><ui-icon name="vscode" w="24"></ui-icon></div>
    <div class="a"><ui-icon name="defender" w="24"></ui-icon></div>
    <div class="a act"><ui-icon name="firefox" w="24"></ui-icon></div>
    </div>
    <div class="tray"><ui-icon name="up" w="16"></ui-icon><ui-icon name="bt" w="12" h="16" style="margin:0 20px 0 18px"></ui-icon>
    <div class="c"><fit-text w="24">ENG</fit-text><fit-text w="12">IN</fit-text></div>
    <ui-icon name="wifi" w="16" style="margin-left:18px"></ui-icon><ui-icon name="mute" w="16" style="margin-left:7px"></ui-icon><ui-icon name="battery" w="16" style="margin:0 16px 0 9px"></ui-icon>
    <div class="e"><fit-text w="30">14:34</fit-text><fit-text w="63">19-12-2023</fit-text></div>
    <ui-icon name="bell" w="16" style="margin-left:7px"></ui-icon></div>`;
  }
}
customElements.define('task-bar',TaskBar);

class BrowserDesktop extends HTMLElement{
  connectedCallback(){
    this.attachShadow({mode:'open'}).innerHTML=`<style>
    :host{display:flex;flex-direction:column;width:1920px;height:1080px;background:#0d1216}
    main{display:flex;height:919px;padding-left:143px}
    </style><tab-strip></tab-strip><nav-bar></nav-bar><bookmark-bar></bookmark-bar><main><slide-cover></slide-cover><slide-brief></slide-brief></main><task-bar></task-bar>`;
  }
}
customElements.define('browser-desktop',BrowserDesktop);
</script>
</body>
</html>
